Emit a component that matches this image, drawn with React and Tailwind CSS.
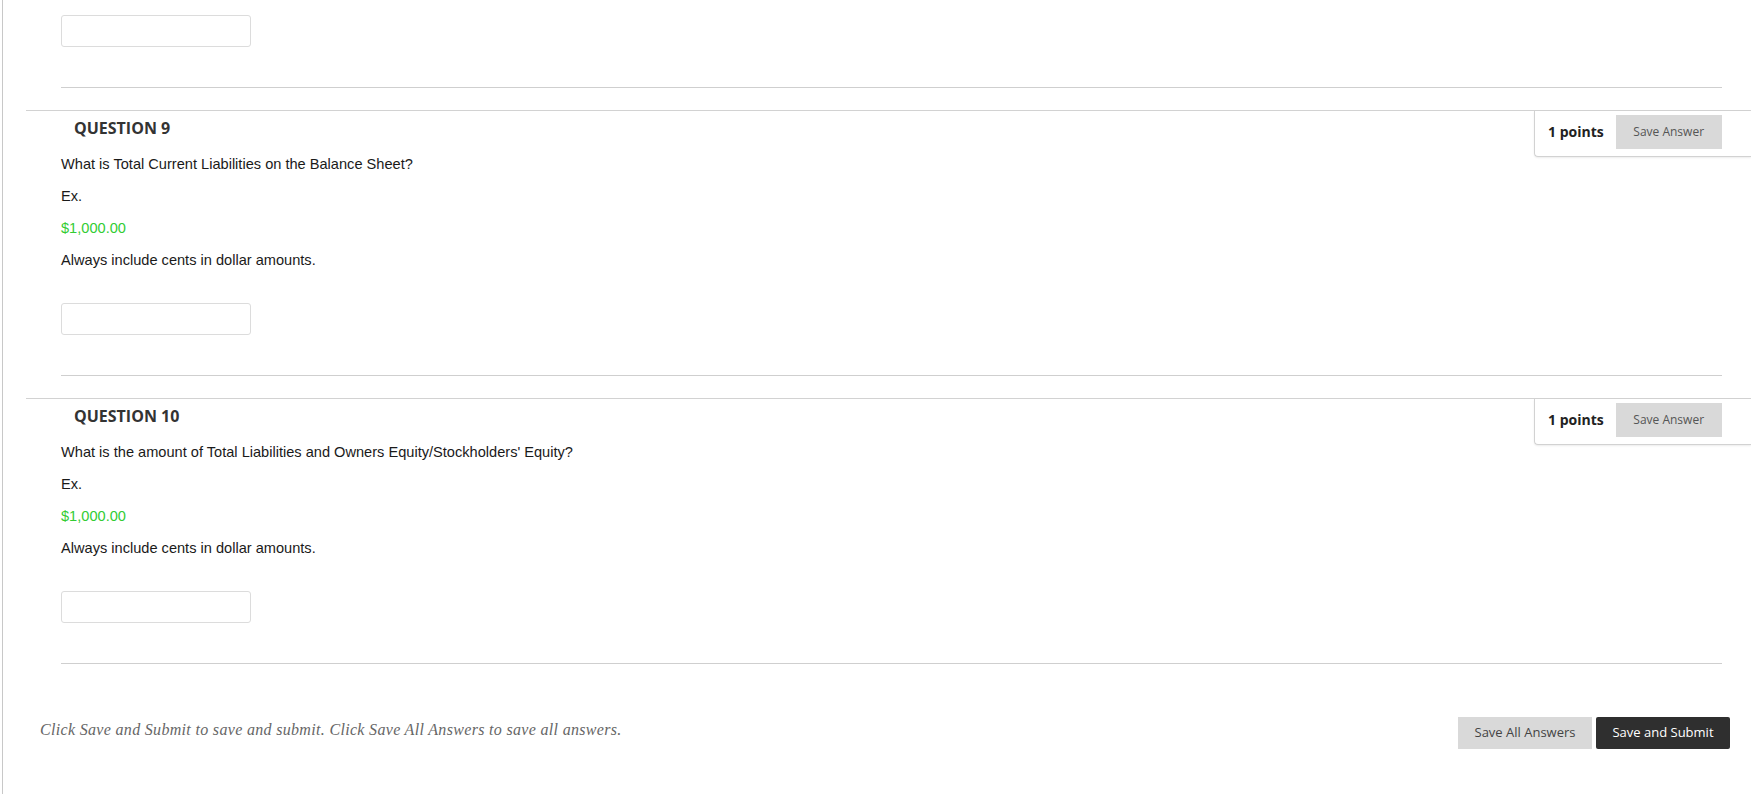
import React from 'react';

const questions = [
  { num: 9, text: 'What is Total Current Liabilities on the Balance Sheet?' },
  { num: 10, text: "What is the amount of Total Liabilities and Owners Equity/Stockholders' Equity?" },
];

const sans = "font-['Open_Sans',Roboto,sans-serif]";
const arial = "font-['Liberation_Sans',Arial,sans-serif]";

const AnswerInput = () => (
  <div className="w-[190px] h-[32px] rounded-[3px] border border-[#dcdcdc] bg-white" />
);

const Separator = () => <div className="ml-[35px] mr-[29px] border-t border-[#cfcfcf]" />;

const Question = ({ num, text }) => (
  <div className="border-t border-[#d2d2d2] mt-[22px]">
    <div className="flex justify-between items-start">
      <div>
        <h3 className={`${sans} pl-[48px] pt-[5px] text-[16px] leading-[24px] font-bold text-[#333]`}>
          QUESTION {num}
        </h3>
        <div className={`${arial} pl-[35px] pt-[15px] text-[14.6px] leading-[18px] text-[#1a1a1a]`}>
          <p className="mb-[14px]">{text}</p>
          <p className="mb-[14px]">Ex.</p>
          <p className="mb-[14px] text-[#33cc33]">$1,000.00</p>
          <p>Always include cents in dollar amounts.</p>
          <div className="mt-[34px]">
            <AnswerInput />
          </div>
        </div>
      </div>
      <div className="w-[217px] h-[46px] border-l border-b border-[#d2d2d2] rounded-bl-[4px] shadow-[0_1px_2px_rgba(0,0,0,0.08)] flex items-start pl-[13px] pt-[4px]">
        <span className={`${sans} text-[14px] font-bold text-[#222] leading-[34px]`}>1 points</span>
        <button className={`${sans} ml-[12px] w-[106px] h-[34px] bg-[#d9d9d9] text-[12px] text-[#555]`}>
          Save Answer
        </button>
      </div>
    </div>
    <div className="mt-[40px]">
      <Separator />
    </div>
  </div>
);

export default function App() {
  return (
    <div className="min-h-[794px] bg-white">
      <div className="ml-[2px] min-h-[794px] border-l border-[#c8c8c8] pb-[40px]">
        <div className="pl-[23px]">
          <div className="pl-[35px] pt-[15px]">
            <AnswerInput />
          </div>
          <div className="mt-[40px]">
            <Separator />
          </div>
          {questions.map((q) => (
            <Question key={q.num} {...q} />
          ))}
        </div>
        <div className="flex justify-between items-start pl-[37px] pr-[21px] mt-[53px]">
          <p className="font-['Liberation_Serif',Georgia,serif] italic text-[16px] text-[#666] mt-[1px] tracking-[0.32px]">
            Click Save and Submit to save and submit. Click Save All Answers to save all answers.
          </p>
          <div className={`${sans} flex gap-[4px] text-[13px]`}>
            <button className="w-[134px] h-[32px] bg-[#d9d9d9] text-[#444]">Save All Answers</button>
            <button className="w-[134px] h-[32px] bg-[#2f2f2f] text-white rounded-[2px]">Save and Submit</button>
          </div>
        </div>
      </div>
    </div>
  );
}
